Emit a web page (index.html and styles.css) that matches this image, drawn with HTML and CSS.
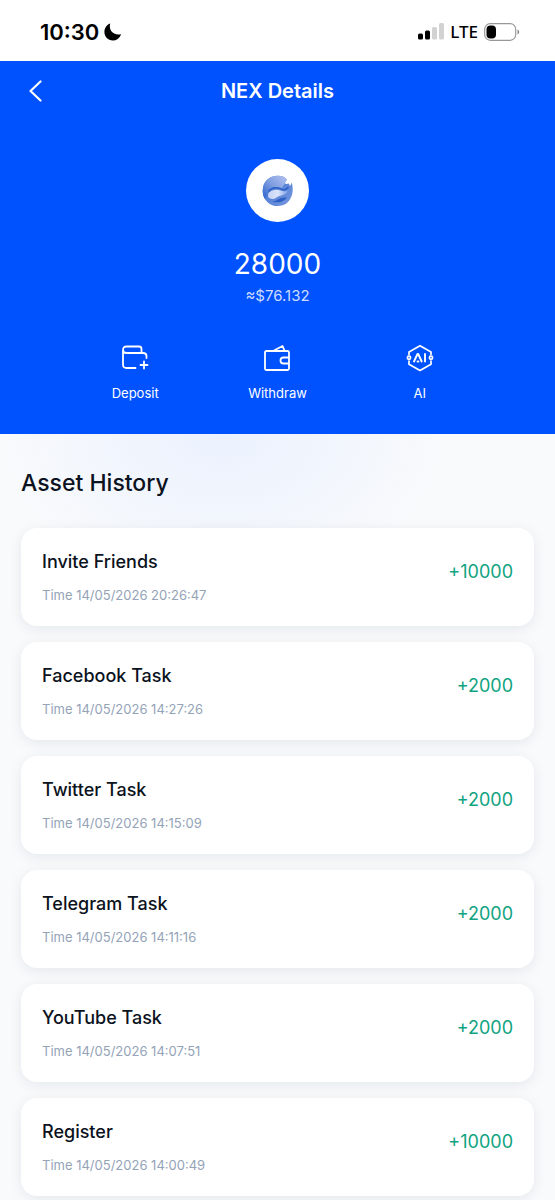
FILE: index.html
```html
<!DOCTYPE html>
<html lang="en">
<head>
<meta charset="utf-8">
<meta name="viewport" content="width=device-width, initial-scale=1">
<title>NEX Details</title>
<link rel="stylesheet" href="styles.css">
</head>
<body>
<div class="status-bar">
  <div class="status-time">
    <span>10:30</span>
    <svg width="18" height="18" viewBox="0 0 18 18" aria-hidden="true"><path d="M6.2.6C4.3 7.500 9.500 13 17.200 11.200 15.500 15.400 12.500 17.500 8.800 17.500 4 17.500.4 13.800.4 9 .4 5.200 2.700 1.800 6.200.6z" fill="#000"/></svg>
  </div>
  <div class="status-icons">
    <svg width="26" height="17" viewBox="0 0 26 17" aria-hidden="true">
      <rect x="0" y="10.500" width="5" height="6" rx="1.500" fill="#000"/>
      <rect x="7" y="7.500" width="5" height="9" rx="1.500" fill="#000"/>
      <rect x="14" y="4" width="5" height="12.500" rx="1.500" fill="#d2d2d2"/>
      <rect x="21" y="0" width="5" height="16.500" rx="1.500" fill="#d2d2d2"/>
    </svg>
    <span class="network">LTE</span>
    <svg width="36" height="18" viewBox="0 0 36 18" aria-hidden="true">
      <rect x=".7" y=".7" width="31" height="16.600" rx="5.500" fill="none" stroke="#999" stroke-width="1.200"/>
      <rect x="2.500" y="2.500" width="9.500" height="13" rx="4" fill="#000"/>
      <path d="M33.500 6.500c2.200.7 2.200 4.300 0 5z" fill="#888"/>
    </svg>
  </div>
</div>

<header class="hero">
  <div class="nav">
    <button class="back" type="button" aria-label="Back">
      <svg width="13" height="22" viewBox="0 0 13 22" aria-hidden="true"><path d="M11.500 1.500 1.500 11l10 9.500" fill="none" stroke="#fff" stroke-width="2.200" stroke-linecap="round" stroke-linejoin="round"/></svg>
    </button>
    <h1 class="title">NEX Details</h1>
  </div>
  <div class="coin">
    <svg width="32" height="32" viewBox="0 0 32 32" aria-hidden="true">
      <defs>
        <linearGradient id="top" x1="1" y1="0" x2="0" y2="1"><stop offset="0" stop-color="#b4c3f0"/><stop offset=".5" stop-color="#7f9de0"/><stop offset="1" stop-color="#2862cc"/></linearGradient>
        <linearGradient id="wave" x1="0" y1="0" x2="1" y2="0"><stop offset="0" stop-color="#c3d2f5"/><stop offset=".5" stop-color="#dbe5fb"/><stop offset="1" stop-color="#7d9fe2"/></linearGradient>
        <linearGradient id="base" x1="0" y1="0" x2="1" y2="1"><stop offset="0" stop-color="#3c70d2"/><stop offset="1" stop-color="#7898de"/></linearGradient>
      </defs>
      <path d="M1 19C-.8 8 6.500.8 16 .8c4 0 7.300 1.500 9 3.700-.8 1.400-2 2.400-2 4 1.200.7 2.400.4 3.400-.2L28.200 11l1.500-3.500c2.800 9-.2 19-8.200 22.500C12 33.500 3 28.500 1 19z" fill="url(#base)"/>
      <path d="M1 19C-.8 8 6.500.8 16 .8c4 0 7.300 1.500 9 3.700-.8 1.400-2 2.400-2.500 4.500l-2.500 4C13 10.500 5.500 12.500 5.500 19.500L3 24c-1-1.500-1.700-3-2-5z" fill="url(#top)"/>
      <path d="M6 20.500c0-5 8-7 13.500-4.800 3.500 1.300 5 .5 6.500-.7-1 4.500-5 5-8.500 6-3 1-4.500 3.500-7.500 3-2.500-.3-4-1.500-4-3.500z" fill="url(#wave)"/>
      <path d="M10 26c5 1 7-4.500 15-3.500-3 4.500-10 6-15 3.500z" fill="#2a60c4"/>
      <path d="M6.500 16.500c3-4 8.500-4.300 13.500-2.200 3 1.200 5 0 6.500-2.300" fill="none" stroke="#2a60c4" stroke-width="1.400"/>
    </svg>
  </div>
  <p class="balance">28000</p>
  <p class="fiat">≈$76.132</p>
  <nav class="actions">
    <button class="action" type="button">
      <svg width="28" height="28" viewBox="0 0 28 28" fill="none" stroke="#fff" stroke-width="1.800" stroke-linecap="round" stroke-linejoin="round" aria-hidden="true">
        <path d="M14.500 24H5.500Q2 24 2 20.500V6q0-3.500 3.500-3.500H18q2.500 0 2.500 2.500v4M2 6q0 3 3.500 3H22q3.500 0 3.500 3v2M23 17.500v7M19.500 21h7"/>
      </svg>
      <span>Deposit</span>
    </button>
    <button class="action" type="button">
      <svg width="28" height="28" viewBox="0 0 28 28" fill="none" stroke="#fff" stroke-width="1.800" stroke-linecap="round" stroke-linejoin="round" aria-hidden="true">
        <path d="M3.500 7h21q1.500 0 1.500 1.500v16q0 1.500-1.500 1.500h-21Q2 26 2 24.500v-16Q2 7 3.500 7zM11 6.500 19.500 2l2 4.500M26 13.500h-5.500a3 3 0 0 0 0 6H26"/>
      </svg>
      <span>Withdraw</span>
    </button>
    <button class="action" type="button">
      <svg width="28" height="28" viewBox="0 0 28 28" fill="none" stroke="#fff" stroke-width="1.700" stroke-linecap="round" stroke-linejoin="round" aria-hidden="true">
        <path d="M3 10.500V8L14 1.800 25 8v2.500M3 17v3.200l11 6.300 11-6.300V17"/>
        <circle cx="3" cy="13.800" r="1.600"/><circle cx="25" cy="13.800" r="1.600"/>
        <path d="M8 17.500l3.500-7.500h.7l3.500 7.500M11.500 17.500h1M19 10v7.500" stroke-width="1.900"/>
      </svg>
      <span>AI</span>
    </button>
  </nav>
</header>

<main class="history">
  <h2 class="heading">Asset History</h2>
  <ul class="list">
    <li class="card"><div><h3 class="name">Invite Friends</h3><p class="time">Time 14/05/2026 20:26:47</p></div><span class="amount">+10000</span></li>
    <li class="card"><div><h3 class="name">Facebook Task</h3><p class="time">Time 14/05/2026 14:27:26</p></div><span class="amount">+2000</span></li>
    <li class="card"><div><h3 class="name">Twitter Task</h3><p class="time">Time 14/05/2026 14:15:09</p></div><span class="amount">+2000</span></li>
    <li class="card"><div><h3 class="name">Telegram Task</h3><p class="time">Time 14/05/2026 14:11:16</p></div><span class="amount">+2000</span></li>
    <li class="card"><div><h3 class="name">YouTube Task</h3><p class="time">Time 14/05/2026 14:07:51</p></div><span class="amount">+2000</span></li>
    <li class="card"><div><h3 class="name">Register</h3><p class="time">Time 14/05/2026 14:00:49</p></div><span class="amount">+10000</span></li>
  </ul>
</main>
</body>
</html>
```
FILE: styles.css
```css
* { box-sizing: border-box; }
body, h1, h2, h3, p, ul { margin: 0; padding: 0; }
body {
  background: #f8fafc;
  color: #0b1220;
  font-family: Inter, "Liberation Sans", sans-serif;
}
svg { display: block; flex: none; }
button {
  border: 0;
  padding: 0;
  background: none;
  color: inherit;
  font: inherit;
  cursor: pointer;
}
.status-bar {
  display: flex;
  justify-content: space-between;
  align-items: center;
  height: 61px;
  padding: 2px 35px 0 40px;
  background: #fff;
  color: #000;
}
.status-time {
  display: flex;
  align-items: center;
  gap: 5px;
  font-size: 22px;
  font-weight: 600;
}
.status-icons { display: flex; align-items: center; gap: 6px; }
.network { font-family: "Noto Sans", sans-serif; font-size: 17px; font-weight: 500; }
.hero {
  display: flex;
  flex-direction: column;
  align-items: center;
  padding-bottom: 32px;
  background: #0052ff;
  color: #fff;
}
.nav {
  display: grid;
  grid-template-columns: 40px 1fr 40px;
  align-items: center;
  align-self: stretch;
  height: 60px;
  padding: 0 15px;
}
.back { display: flex; justify-content: center; }
.title { text-align: center; font-size: 20px; font-weight: 600; }
.coin {
  display: flex;
  align-items: center;
  justify-content: center;
  width: 63px;
  height: 63px;
  margin-top: 38px;
  border-radius: 50%;
  background: #fff;
}
.balance { margin-top: 24px; font-size: 28px; line-height: 36px; }
.fiat { margin-top: 4px; font-size: 15px; line-height: 20px; color: #ccdcff; }
.actions {
  display: grid;
  grid-template-columns: repeat(3, 1fr);
  align-self: stretch;
  margin-top: 38px;
  padding: 0 64px;
}
.action {
  display: flex;
  flex-direction: column;
  align-items: center;
  gap: 12px;
  font-size: 13px;
  line-height: 18px;
}
.history {
  padding: 32px 21px 4px;
  background: radial-gradient(ellipse 220px 150px at 40% 0, #ebf1fe, #f8fafc);
}
.heading { font-size: 23px; font-weight: 500; line-height: 34px; }
.list { display: grid; gap: 16px; margin-top: 28px; list-style: none; }
.card {
  display: flex;
  align-items: center;
  justify-content: space-between;
  padding: 21px;
  border-radius: 16px;
  background: #fff;
  box-shadow: 0 3px 14px rgba(15, 23, 42, 0.08);
}
.name { font-size: 18px; font-weight: 500; line-height: 26px; }
.time { margin-top: 10px; font-size: 13px; line-height: 20px; color: #94a3b8; }
.amount {
  padding-bottom: 10px;
  color: #10a37f;
  font-size: 18px;
  line-height: 24px;
}
```
